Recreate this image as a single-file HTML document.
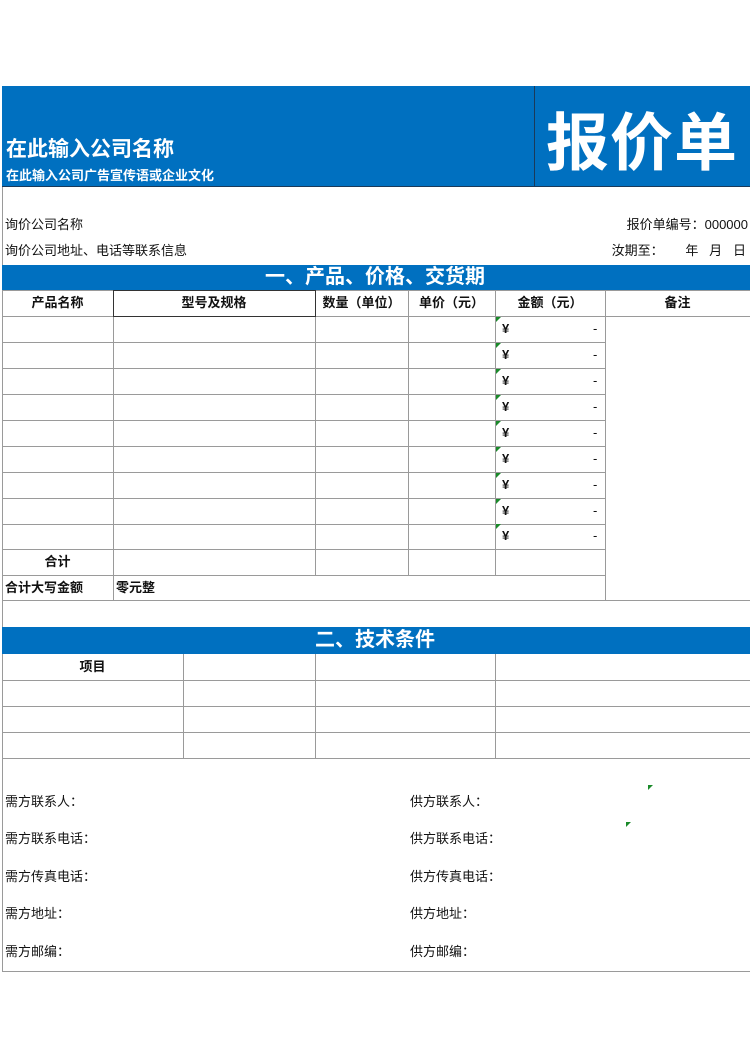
<!DOCTYPE html>
<html><head><meta charset="utf-8"><style>
*{margin:0;padding:0;box-sizing:border-box}
body{width:750px;height:1058px;background:#fff;position:relative;overflow:hidden;font-family:"Liberation Sans","Noto Sans CJK SC",sans-serif;color:#111}
.a{position:absolute;white-space:nowrap}
.blue{background:#0070c0;position:absolute}
.h{position:absolute;height:1px;background:#9a9a9a}
.v{position:absolute;width:1px;background:#9a9a9a}
.t{position:absolute;font-size:13px;line-height:26px;white-space:nowrap}
.b{font-weight:bold}
.c{text-align:center}
.tri{position:absolute;width:0;height:0;border-top:5px solid #1a8a2a;border-right:5px solid transparent}
</style></head><body>
<div class="blue" style="left:2px;top:86px;width:748px;height:101px"></div>
<div class="a" style="left:534px;top:86px;width:1px;height:101px;background:#1a3a5a"></div>
<div class="a" style="left:2px;top:186px;width:748px;height:1px;background:#1a3a5a"></div>
<div class="a b" style="left:6px;top:133px;font-size:21px;color:#fff">在此输入公司名称</div>
<div class="a b" style="left:6px;top:165px;font-size:13px;color:#fff">在此输入公司广告宣传语或企业文化</div>
<div class="a b" style="left:546px;top:104px;font-size:63px;line-height:80px;color:#fff;letter-spacing:1px">报价单</div>
<div class="v" style="left:2px;top:187px;height:785px"></div>
<div class="t" style="left:5px;top:212px">询价公司名称</div>
<div class="t" style="left:5px;top:238px">询价公司地址、电话等联系信息</div>
<div class="t" style="right:2px;top:212px">报价单编号：000000</div>
<div class="t" style="right:4px;top:238px">汝期至：&nbsp;&nbsp;&nbsp;&nbsp;&nbsp;&nbsp;年&nbsp;&nbsp;&nbsp;月&nbsp;&nbsp;&nbsp;日</div>
<div class="blue" style="left:2px;top:265px;width:748px;height:25px"></div>
<div class="a b c" style="left:0;width:750px;top:264px;font-size:20px;line-height:27px;color:#fff">一、产品、价格、交货期</div>
<div class="h" style="left:2px;top:290px;width:748px"></div>
<div class="h" style="left:2px;top:316px;width:748px"></div>
<div class="h" style="left:2px;top:342px;width:603px"></div>
<div class="h" style="left:2px;top:368px;width:603px"></div>
<div class="h" style="left:2px;top:394px;width:603px"></div>
<div class="h" style="left:2px;top:420px;width:603px"></div>
<div class="h" style="left:2px;top:446px;width:603px"></div>
<div class="h" style="left:2px;top:472px;width:603px"></div>
<div class="h" style="left:2px;top:498px;width:603px"></div>
<div class="h" style="left:2px;top:524px;width:603px"></div>
<div class="h" style="left:2px;top:549px;width:603px"></div>
<div class="h" style="left:2px;top:575px;width:603px"></div>
<div class="h" style="left:2px;top:600px;width:748px"></div>
<div class="v" style="left:113px;top:290px;height:310px"></div>
<div class="v" style="left:315px;top:290px;height:285px"></div>
<div class="v" style="left:408px;top:290px;height:285px"></div>
<div class="v" style="left:495px;top:290px;height:285px"></div>
<div class="v" style="left:605px;top:290px;height:310px"></div>
<div class="a" style="left:113px;top:290px;width:203px;height:27px;border:1px solid #333"></div>
<div class="t b c" style="left:2px;width:111px;top:290px">产品名称</div>
<div class="t b c" style="left:113px;width:202px;top:290px">型号及规格</div>
<div class="t b c" style="left:315px;width:93px;top:290px">数量（单位）</div>
<div class="t b c" style="left:408px;width:87px;top:290px">单价（元）</div>
<div class="t b c" style="left:495px;width:110px;top:290px">金额（元）</div>
<div class="t b c" style="left:605px;width:145px;top:290px">备注</div>
<div class="t b c" style="left:2px;width:111px;top:549px">合计</div>
<div class="t b" style="left:5px;top:575px">合计大写金额</div>
<div class="t b" style="left:116px;top:575px">零元整</div>
<div id="yen"></div>
<div class="blue" style="left:2px;top:627px;width:748px;height:27px"></div>
<div class="a b c" style="left:0;width:750px;top:627px;font-size:20px;line-height:27px;color:#fff">二、技术条件</div>
<div class="h" style="left:2px;top:680px;width:748px"></div>
<div class="h" style="left:2px;top:706px;width:748px"></div>
<div class="h" style="left:2px;top:732px;width:748px"></div>
<div class="h" style="left:2px;top:758px;width:748px"></div>
<div class="v" style="left:183px;top:654px;height:104px"></div>
<div class="v" style="left:315px;top:654px;height:104px"></div>
<div class="v" style="left:495px;top:654px;height:104px"></div>
<div class="t b c" style="left:2px;width:181px;top:654px">项目</div>
<div class="t" style="left:5px;top:789px">需方联系人：</div>
<div class="t" style="left:5px;top:826px">需方联系电话：</div>
<div class="t" style="left:5px;top:864px">需方传真电话：</div>
<div class="t" style="left:5px;top:901px">需方地址：</div>
<div class="t" style="left:5px;top:939px">需方邮编：</div>
<div class="t" style="left:410px;top:789px">供方联系人：</div>
<div class="t" style="left:410px;top:826px">供方联系电话：</div>
<div class="t" style="left:410px;top:864px">供方传真电话：</div>
<div class="t" style="left:410px;top:901px">供方地址：</div>
<div class="t" style="left:410px;top:939px">供方邮编：</div>
<div class="tri" style="left:648px;top:785px"></div>
<div class="tri" style="left:626px;top:822px"></div>
<div class="h" style="left:2px;top:971px;width:748px"></div>
<script>
var s='';for(var i=0;i<9;i++){var y=316+i*26;if(i==8)y=523;s+='<div class="tri" style="left:496px;top:'+(y+1)+'px"></div><div class="t b" style="left:502px;top:'+y+'px">¥</div><div class="t" style="left:593px;top:'+y+'px">-</div>';}
document.getElementById('yen').innerHTML=s;
</script>
</body></html>
